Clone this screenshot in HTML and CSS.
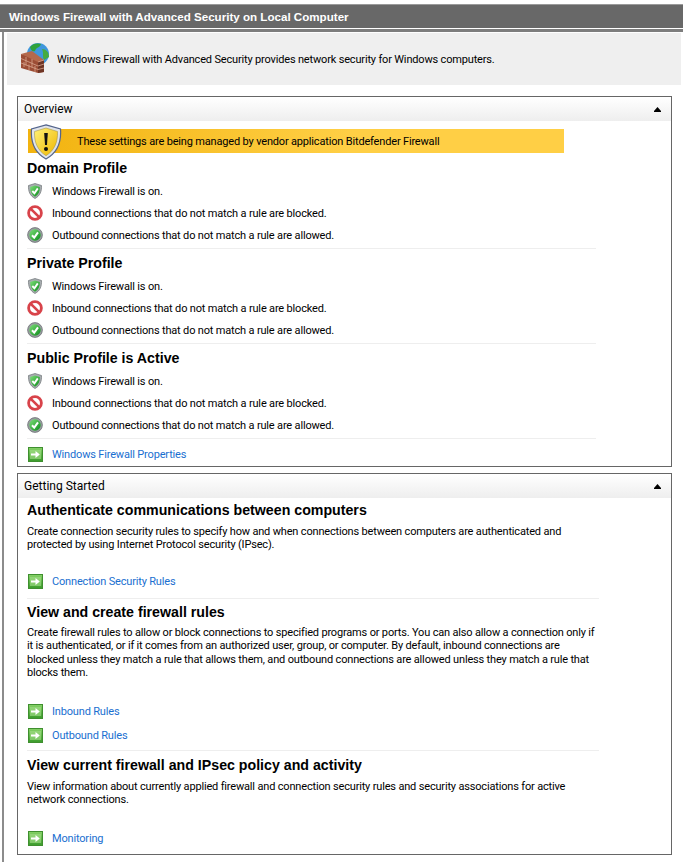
FILE: index.html
```html
<!DOCTYPE html>
<html lang="en">
<head>
<meta charset="utf-8">
<title>Windows Firewall with Advanced Security</title>
<link rel="stylesheet" href="styles.css">
</head>
<body>
<svg class="defs" width="0" height="0" aria-hidden="true">
  <defs>
    <linearGradient id="gs" x1="0" y1="0" x2="1" y2="1"><stop offset="0" stop-color="#7fe07a"/><stop offset="1" stop-color="#0c8a1a"/></linearGradient>
    <linearGradient id="gb" x1="0" y1="0" x2="0" y2="1"><stop offset="0" stop-color="#86d267"/><stop offset="1" stop-color="#3a9a2b"/></linearGradient>
    <linearGradient id="gy" x1="0" y1="0" x2="1" y2="1"><stop offset="0" stop-color="#fff176"/><stop offset="1" stop-color="#eeb600"/></linearGradient>
    <symbol id="i-shield" viewBox="0 0 16 16">
      <path d="M8 .5 L14.5 2.5 C14.8 8.5 13 12.8 8 15.5 C3 12.8 1.2 8.5 1.500 2.500Z" fill="#a8adb0" stroke="#6d7376" stroke-width=".7"/>
      <path d="M8 2.500 L12.800 4 C13 8.500 11.500 11.500 8 13.700 C4.500 11.500 3 8.500 3.200 4Z" fill="url(#gs)"/>
      <path d="M5.300 8 L7.400 10.300 L10.800 5.400" fill="none" stroke="#fff" stroke-width="1.900"/>
    </symbol>
    <symbol id="i-block" viewBox="0 0 16 16">
      <circle cx="8" cy="8" r="6.400" fill="#fff" stroke="#d8434a" stroke-width="2.800"/>
      <path d="M3.800 3.800 L12.200 12.200" stroke="#d8434a" stroke-width="2.600"/>
    </symbol>
    <symbol id="i-ok" viewBox="0 0 16 16">
      <circle cx="8" cy="8" r="7.400" fill="#9a9fa2" stroke="#5f6467" stroke-width=".7"/>
      <circle cx="8" cy="8" r="5.700" fill="url(#gs)"/>
      <path d="M5 8.200 L7.200 10.600 L11 5.300" fill="none" stroke="#fff" stroke-width="2"/>
    </symbol>
    <symbol id="i-go" viewBox="0 0 15 15">
      <rect x=".5" y=".5" width="14" height="14" fill="url(#gb)" stroke="#3f8f2f"/>
      <rect x="2" y="3" width="11" height="9" fill="#a5e08a" opacity=".6"/>
      <path d="M3 6.500 H7.500 V4 L11.800 7.500 L7.500 11 V8.500 H3Z" fill="#fff"/>
    </symbol>
  </defs>
</svg>

<header class="titlebar">Windows Firewall with Advanced Security on Local Computer</header>
<div class="rule"></div>
<div class="frame">
  <div class="intro">
    <svg class="wall" viewBox="0 0 34 34" width="34" height="34" aria-hidden="true">
      <circle cx="20" cy="13" r="11" fill="#3f97dc"/>
      <path d="M12 6 C15 2 20 2 23 3 C22 7 18 6 17 10 C15 11 13 10 12 6Z" fill="#2fa23a"/>
      <path d="M24 8 C28 8 31 11 31 16 L26 19 C24 16 26 12 24 8Z" fill="#46ab3e"/>
      <path d="M3 13 L26 19 L26 31 L20 32 L3 27Z" fill="#9c4d35"/>
      <path d="M26 19 L20 21 L20 32 L26 31Z" fill="#6e3424"/>
      <path d="M3 13 L14 10 L26 19 L20 21Z" fill="#b4694c"/>
      <path d="M3 17.500 L20 25 M3 22 L20 28.500 M8 16 V24.500 M14 18 V26.500 M6 21 V26 M11 23.500 V29 M17 25 V31 M20 21 L26 19 M20 25 L26 23 M20 28.500 L26 27" stroke="#d8a48e" stroke-width=".8" fill="none"/>
    </svg>
    <p class="intro-text">Windows Firewall with Advanced Security provides network security for Windows computers.</p>
  </div>

  <section class="panel panel-overview">
    <div class="panel-head"><span>Overview</span><svg class="caret" viewBox="0 0 7 5" width="7" height="5" aria-hidden="true"><path d="M3.500 0 L7 4 V5 H0 V4Z" fill="#000"/></svg></div>
    <div class="panel-body">
      <div class="notice">
        <svg class="notice-icon" viewBox="0 0 32 36" width="32" height="36" aria-hidden="true">
          <path d="M16 .8 L30.500 5 C31.500 18 27 29 16 35 C5 29 .5 18 1.500 5Z" fill="#dfe3ea" stroke="#54658c" stroke-width="1.200"/>
          <path d="M16 4 L27.500 7.500 C28 18 24.500 26.500 16 31.700 C7.500 26.500 4 18 4.500 7.500Z" fill="url(#gy)" stroke="#9b8a3a" stroke-width=".5"/>
          <path d="M14.200 9 H17.800 L17 21 H15Z" fill="#111"/>
          <circle cx="16" cy="25" r="2" fill="#111"/>
        </svg>
        <span>These settings are being managed by vendor application Bitdefender Firewall</span>
      </div>

      <div class="profile">
        <h2>Domain Profile</h2>
        <ul class="status">
          <li><svg><use href="#i-shield"/></svg>Windows Firewall is on.</li>
          <li><svg><use href="#i-block"/></svg>Inbound connections that do not match a rule are blocked.</li>
          <li><svg><use href="#i-ok"/></svg>Outbound connections that do not match a rule are allowed.</li>
        </ul>
      </div>
      <div class="profile">
        <h2>Private Profile</h2>
        <ul class="status">
          <li><svg><use href="#i-shield"/></svg>Windows Firewall is on.</li>
          <li><svg><use href="#i-block"/></svg>Inbound connections that do not match a rule are blocked.</li>
          <li><svg><use href="#i-ok"/></svg>Outbound connections that do not match a rule are allowed.</li>
        </ul>
      </div>
      <div class="profile">
        <h2>Public Profile is Active</h2>
        <ul class="status">
          <li><svg><use href="#i-shield"/></svg>Windows Firewall is on.</li>
          <li><svg><use href="#i-block"/></svg>Inbound connections that do not match a rule are blocked.</li>
          <li><svg><use href="#i-ok"/></svg>Outbound connections that do not match a rule are allowed.</li>
        </ul>
      </div>
      <a class="action props" href="#"><svg><use href="#i-go"/></svg>Windows Firewall Properties</a>
    </div>
  </section>

  <section class="panel panel-start">
    <div class="panel-head"><span>Getting Started</span><svg class="caret" viewBox="0 0 7 5" width="7" height="5" aria-hidden="true"><path d="M3.500 0 L7 4 V5 H0 V4Z" fill="#000"/></svg></div>
    <div class="panel-body">
      <div class="topic topic-a">
        <h2>Authenticate communications between computers</h2>
        <p>Create connection security rules to specify how and when connections between computers are authenticated and<br>protected by using Internet Protocol security (IPsec).</p>
        <a class="action" href="#"><svg><use href="#i-go"/></svg>Connection Security Rules</a>
      </div>
      <div class="topic topic-b">
        <h2>View and create firewall rules</h2>
        <p>Create firewall rules to allow or block connections to specified programs or ports. You can also allow a connection only if<br>it is authenticated, or if it comes from an authorized user, group, or computer. By default, inbound connections are<br>blocked unless they match a rule that allows them, and outbound connections are allowed unless they match a rule that<br>blocks them.</p>
        <a class="action" href="#"><svg><use href="#i-go"/></svg>Inbound Rules</a>
        <a class="action" href="#"><svg><use href="#i-go"/></svg>Outbound Rules</a>
      </div>
      <div class="topic topic-c">
        <h2>View current firewall and IPsec policy and activity</h2>
        <p>View information about currently applied firewall and connection security rules and security associations for active<br>network connections.</p>
        <a class="action" href="#"><svg><use href="#i-go"/></svg>Monitoring</a>
      </div>
    </div>
  </section>
</div>
</body>
</html>
```
FILE: styles.css
```css
* { box-sizing: border-box; }
html, body { margin: 0; padding: 0; }
body {
  width: 683px;
  height: 862px;
  overflow: hidden;
  background: #fff;
  color: #000;
  font-family: Roboto, "Liberation Sans", Arial, sans-serif;
  font-size: 11px;
  letter-spacing: -0.17px;
  padding-top: 4px;
}
.defs { position: absolute; }
.titlebar {
  height: 24px;
  background: #686868;
  border-top: 1px solid #9a9a9a;
  color: #fff;
  font-family: "Liberation Sans", Arial, sans-serif;
  font-weight: bold;
  font-size: 11.6px;
  letter-spacing: 0;
  line-height: 23px;
  padding-left: 9px;
}
.rule { height: 3px; margin-top: 1px; background: #7d7d7d; }
.frame {
  margin-left: 2px;
  border-left: 2px solid #8c8c8c;
  padding: 1px 2px 0 3px;
  height: 834px;
}
.intro {
  height: 52px;
  background: #efefef;
  display: flex;
  align-items: center;
  padding-left: 11px;
  gap: 5px;
}
.wall { flex: none; margin-top: -2px; }
.intro-text { margin: 1px 0 0; white-space: nowrap; }
.panel {
  width: 655px;
  margin-left: 10px;
  border: 1px solid #666;
  position: relative;
}
.panel-overview { margin-top: 11px; height: 371px; }
.panel-start { margin-top: 6px; height: 382px; }
.panel-head {
  height: 24px;
  padding: 0 10px 0 6px;
  display: flex;
  align-items: center;
  justify-content: space-between;
  background: linear-gradient(#fff, #eeeeee);
  font-size: 12px;
  letter-spacing: 0;
}
.panel-body { padding: 0 9px; }
.notice {
  width: 536px;
  height: 24px;
  margin: 8px 0 1px 1px;
  background: linear-gradient(90deg, #f2b30f, #ffcf45 60%);
  padding-left: 49px;
  display: flex;
  align-items: center;
  position: relative;
}
.notice-icon { position: absolute; left: 2px; top: -5px; }
.profile { width: 569px; border-bottom: 1px solid #eeeeee; height: 95px; padding-top: 5px; }
h2 {
  margin: 0;
  font-family: "Liberation Sans", Arial, sans-serif;
  font-size: 14.2px;
  letter-spacing: 0;
  line-height: 18px;
  font-weight: bold;
}
.status { list-style: none; margin: 3px 0 0; padding: 0; }
.status li { display: flex; align-items: center; height: 22px; gap: 9px; }
.status svg { width: 16px; height: 16px; flex: none; }
.action {
  display: flex;
  align-items: center;
  gap: 9px;
  height: 24px;
  color: #1a6fd0;
  text-decoration: none;
  margin-left: 1px;
}
.action svg { width: 15px; height: 15px; flex: none; }
.props { margin-top: 3px; }
.topic { width: 572px; border-bottom: 1px solid #eeeeee; }
.topic p { margin: 0; line-height: 13.33px; white-space: nowrap; }
.topic-a { height: 101px; padding-top: 3px; }
.topic-a p { margin-top: 6px; }
.topic-a .action { margin-top: 18px; }
.topic-b { height: 152px; padding-top: 4px; }
.topic-b p { margin-top: 5px; }
.topic-b p + .action { margin-top: 20px; }
.topic-c { height: 100px; padding-top: 5px; border-bottom: 0; }
.topic-c p { margin-top: 6px; }
.topic-c .action { margin-top: 20px; }
```
